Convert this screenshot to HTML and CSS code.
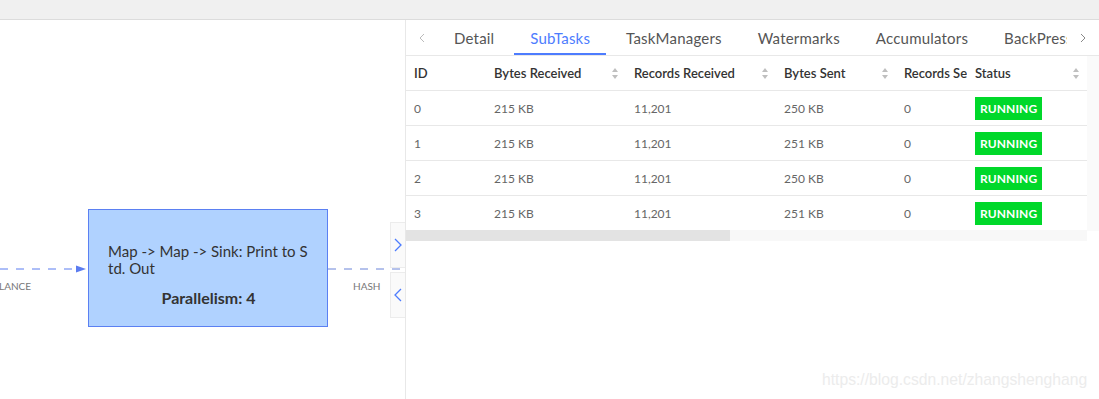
FILE: index.html
```html
<!DOCTYPE html>
<html lang="en">
<head>
  <meta charset="UTF-8" />
  <title>Job Vertex</title>
  <link rel="stylesheet" href="styles.css">
</head>
<body>
  <div class="topbar"></div>

  <div class="main">
    <!-- Graph canvas -->
    <div class="graph">
      <svg class="edges" width="405" height="380" viewBox="0 0 405 380">
        <line x1="0" y1="249" x2="80" y2="249" stroke="#5b7cf0" stroke-width="1" stroke-dasharray="8 8" />
        <polygon points="76,245.5 86,249 76,252.5" fill="#5b7cf0" />
        <line x1="328" y1="249" x2="405" y2="249" stroke="#6a84d8" stroke-width="1" stroke-dasharray="8 8" />
      </svg>
      <span class="edge-label label-left">LANCE</span>
      <span class="edge-label label-right">HASH</span>

      <div class="node">
        <div class="node-name">Map -&gt; Map -&gt; Sink: Print to Std. Out</div>
        <div class="node-par">Parallelism: 4</div>
      </div>

      <div class="collapse">
        <button class="collapse-btn">
          <svg width="10" height="14" viewBox="0 0 10 14"><path d="M2 1 L8 7 L2 13" fill="none" stroke="#4d7cfe" stroke-width="1.3"/></svg>
        </button>
        <button class="collapse-btn">
          <svg width="10" height="14" viewBox="0 0 10 14"><path d="M8 1 L2 7 L8 13" fill="none" stroke="#4d7cfe" stroke-width="1.3"/></svg>
        </button>
      </div>
    </div>

    <!-- Detail drawer -->
    <div class="drawer">
      <div class="tabs">
        <span class="tab-arrow">
          <svg width="8" height="10" viewBox="0 0 8 10"><path d="M6 1 L2 5 L6 9" fill="none" stroke="#bbb" stroke-width="1"/></svg>
        </span>
        <div class="tab-list">
          <span class="tab">Detail</span>
          <span class="tab active">SubTasks</span>
          <span class="tab">TaskManagers</span>
          <span class="tab">Watermarks</span>
          <span class="tab">Accumulators</span>
          <span class="tab">BackPressure</span>
        </div>
        <span class="tab-arrow">
          <svg width="8" height="10" viewBox="0 0 8 10"><path d="M2 1 L6 5 L2 9" fill="none" stroke="#888" stroke-width="1"/></svg>
        </span>
      </div>

      <div class="table-area">
        <div class="table-wrap">
          <table class="subtasks">
            <colgroup>
              <col style="width:80px">
              <col style="width:140px">
              <col style="width:150px">
              <col style="width:120px">
              <col style="width:71px">
              <col style="width:120px">
            </colgroup>
            <thead>
              <tr>
                <th>ID</th>
                <th>Bytes Received<i class="sorter"></i></th>
                <th>Records Received<i class="sorter"></i></th>
                <th>Bytes Sent<i class="sorter"></i></th>
                <th class="clip">Records Sent</th>
                <th>Status<i class="sorter"></i></th>
              </tr>
            </thead>
            <tbody id="rows"></tbody>
          </table>
          <div class="hscroll"><div class="thumb"></div></div>
        </div>
        <div class="table-side"></div>
      </div>
    </div>
  </div>

  <div class="watermark">https://blog.csdn.net/zhangshenghang</div>

  <script>
    const subtasks = [
      { id: 0, bytesIn: '215 KB', recordsIn: '11,201', bytesOut: '250 KB', recordsOut: 0 },
      { id: 1, bytesIn: '215 KB', recordsIn: '11,201', bytesOut: '251 KB', recordsOut: 0 },
      { id: 2, bytesIn: '215 KB', recordsIn: '11,201', bytesOut: '250 KB', recordsOut: 0 },
      { id: 3, bytesIn: '215 KB', recordsIn: '11,201', bytesOut: '251 KB', recordsOut: 0 }
    ];

    const rows = document.getElementById('rows');
    subtasks.forEach(t => {
      const tr = document.createElement('tr');
      tr.innerHTML = `
        <td>${t.id}</td>
        <td>${t.bytesIn}</td>
        <td>${t.recordsIn}</td>
        <td>${t.bytesOut}</td>
        <td>${t.recordsOut}</td>
        <td><span class="status">RUNNING</span></td>
      `;
      rows.appendChild(tr);
    });
  </script>
</body>
</html>
```

FILE: styles.css
```css
body {
  margin: 0;
  font-family: Lato, "Open Sans", sans-serif;
  color: #333;
  background: #fff;
  overflow: hidden;
}
.topbar {
  height: 19px;
  background: #f0f0f0;
  border-bottom: 1px solid #dcdcdc;
}
.main {
  display: flex;
  height: 379px;
}

/* graph */
.graph {
  position: relative;
  width: 405px;
  flex: none;
  border-right: 1px solid #e8e8e8;
}
.edges {
  position: absolute;
  left: 0;
  top: 0;
}
.edge-label {
  position: absolute;
  top: 260px;
  font-size: 10px;
  color: #777;
}
.label-left { left: -1px; }
.label-right { left: 353px; }
.node {
  position: absolute;
  left: 88px;
  top: 189px;
  width: 201px;
  height: 116px;
  padding: 0 18px 0 19px;
  background: #b0d2ff;
  border: 1px solid #5b80f2;
  display: flex;
  flex-direction: column;
  justify-content: center;
  font-size: 15px;
  color: #333;
}
.node-name {
  line-height: 17px;
  word-break: break-all;
  margin-top: 14px;
}
.node-par {
  margin-top: 11px;
  text-align: center;
  font-size: 16px;
  font-weight: bold;
}
.collapse {
  position: absolute;
  right: 0;
  top: 202px;
  display: flex;
  flex-direction: column;
  gap: 4px;
}
.collapse-btn {
  width: 15px;
  height: 46px;
  padding: 0;
  background: #fafafa;
  border: 1px solid #ececec;
  border-right: none;
  display: flex;
  align-items: center;
  justify-content: center;
}

/* drawer */
.drawer {
  flex: 1;
  min-width: 0;
}
.tabs {
  display: flex;
  height: 35px;
  border-bottom: 1px solid #e8e8e8;
}
.tab-arrow {
  width: 32px;
  flex: none;
  display: flex;
  align-items: center;
  justify-content: center;
}
.tab-list {
  flex: 1;
  display: flex;
  overflow: hidden;
  white-space: nowrap;
}
.tab {
  padding: 4px 16px 0;
  margin-right: 4px;
  font-size: 15px;
  letter-spacing: 0.2px;
  line-height: 29px;
  color: #555;
  border-bottom: 2px solid transparent;
}
.tab.active {
  color: #4d7cfe;
  border-bottom-color: #4d7cfe;
}

.table-area {
  display: flex;
  align-items: flex-start;
}
.table-wrap {
  width: 681px;
  flex: none;
}
.table-side {
  flex: 1;
  height: 175px;
  background: #fafafa;
}
.subtasks {
  width: 681px;
  table-layout: fixed;
  border-collapse: collapse;
  font-size: 12px;
}
.subtasks th {
  position: relative;
  height: 34px;
  padding: 0 8px;
  text-align: left;
  font-size: 13px;
  font-weight: 600;
  color: #333;
  border-bottom: 1px solid #e8e8e8;
  white-space: nowrap;
}
.subtasks th.clip {
  overflow: hidden;
  text-overflow: clip;
}
.subtasks td {
  height: 34px;
  padding: 0 8px;
  color: #666;
  border-bottom: 1px solid #e8e8e8;
}
.subtasks tbody tr:last-child td {
  border-bottom: none;
}
.sorter {
  position: absolute;
  right: 7px;
  top: 12px;
  width: 7px;
  height: 11px;
}
.sorter::before,
.sorter::after {
  content: "";
  position: absolute;
  left: 0;
  border-left: 3.5px solid transparent;
  border-right: 3.5px solid transparent;
}
.sorter::before {
  top: 0;
  border-bottom: 4px solid #bfbfbf;
}
.sorter::after {
  bottom: 0;
  border-top: 4px solid #bfbfbf;
}
.status {
  display: inline-block;
  padding: 0 5px;
  line-height: 23px;
  background: #00d82a;
  color: #fff;
  font-weight: bold;
  font-size: 12px;
  letter-spacing: 0.1px;
}
.hscroll {
  height: 11px;
  background: #f8f8f8;
}
.thumb {
  width: 324px;
  height: 100%;
  background: #e3e3e3;
}

.watermark {
  position: absolute;
  left: 822px;
  top: 371px;
  font-family: "Liberation Sans", Arial, sans-serif;
  font-size: 15.7px;
  color: #ececec;
}
```
